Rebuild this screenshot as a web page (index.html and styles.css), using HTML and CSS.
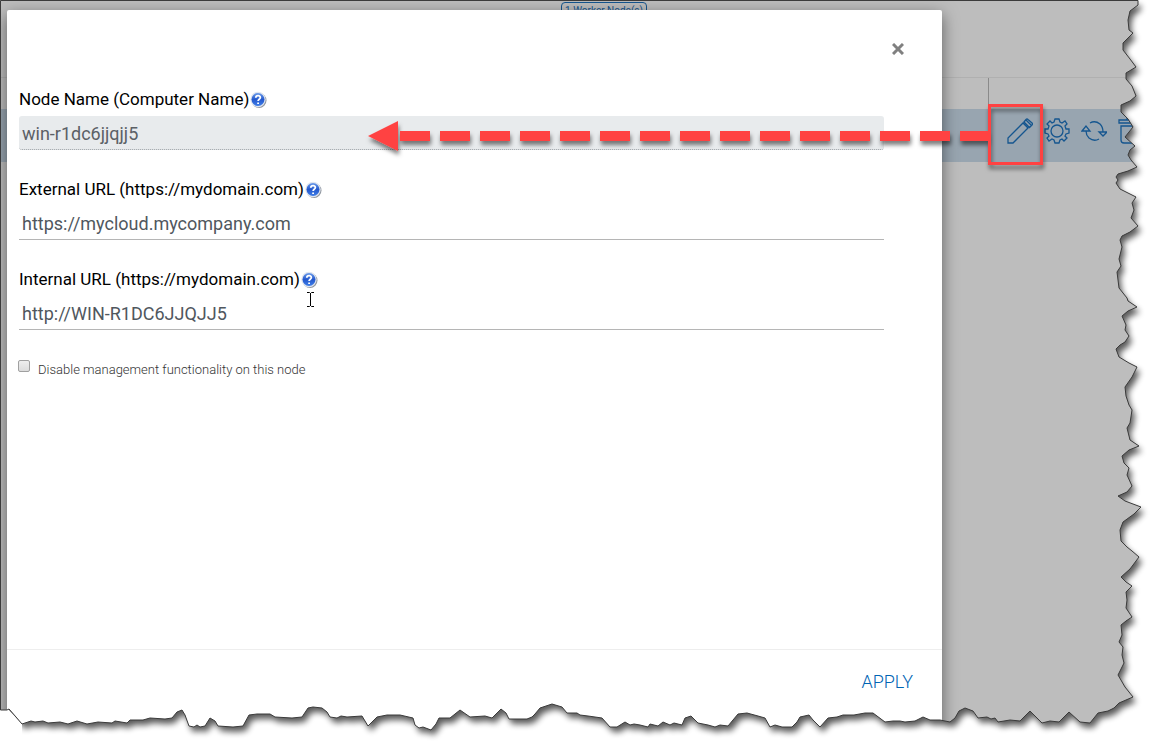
FILE: index.html
```
<!DOCTYPE html>
<html lang="en">
<head>
<meta charset="utf-8">
<title>Edit Worker Node</title>
<link rel="stylesheet" href="styles.css">
</head>
<body>
<div class="page">
  <div class="toolbar">
    <button type="button" class="count">1 Worker Node(s)</button>
  </div>
  <table class="nodes">
    <thead>
      <tr><th></th><th class="actions-head"></th></tr>
    </thead>
    <tbody>
      <tr>
        <td></td>
        <td>
          <div class="actions">
            <button type="button" aria-label="Edit"><svg viewBox="0 0 26 26"><path d="M1 25V20L16 5L21 10L6 25ZM17 4L19 1.500Q20 0.500 21 1.500L25 5Q26 6 25 7L22.500 9.500ZM19 2L24 7"/></svg></button>
            <button type="button" aria-label="Settings"><svg viewBox="0 0 26 26"><circle cx="13" cy="13" r="6"/><path d="M11 1H15L16 4L18 5L21 3L23 6L21 8L22 11L25 11V15L22 16L21 18L23 20L20 23L18 21L16 22L15 25H11L10 22L8 21L5 23L3 20L5 18L4 16L1 15V11L4 11L5 8L3 6L6 3L8 5L10 4Z"/></svg></button>
            <button type="button" aria-label="Refresh"><svg viewBox="0 0 26 26"><path d="M9 5Q14 2 19 6Q22 9 22 14M18 21Q13 24 8 20Q5 17 5 13M1 13L5 8L9 13ZM18 14H26L22 18Z"/></svg></button>
            <button type="button" aria-label="Delete"><svg viewBox="0 0 26 26"><path d="M1 2H25V5H1ZM9 2V0H17V2M3 8V22Q3 25 6 25H20Q23 25 23 22V8Z"/></svg></button>
          </div>
        </td>
      </tr>
    </tbody>
  </table>

  <form class="modal">
    <div class="modal-header">
      <button type="button" class="close" aria-label="Close"><svg viewBox="0 0 12 12"><path d="M1 1L11 11M11 1L1 11"/></svg></button>
    </div>
    <div class="modal-body">
      <div class="field">
        <div class="caption">
          <label for="node">Node Name (Computer Name)</label>
          <svg class="help" viewBox="0 0 18 18"><use href="#help"/></svg>
        </div>
        <input type="text" id="node" value="win-r1dc6jjqjj5" disabled>
      </div>
      <div class="field">
        <div class="caption">
          <label for="external">External URL (https://mydomain.com)</label>
          <svg class="help" viewBox="0 0 18 18"><use href="#help"/></svg>
        </div>
        <input type="text" id="external" value="https://mycloud.mycompany.com">
      </div>
      <div class="field">
        <div class="caption">
          <label for="internal">Internal URL (https://mydomain.com)</label>
          <svg class="help" viewBox="0 0 18 18"><use href="#help"/></svg>
        </div>
        <input type="text" id="internal" value="http://WIN-R1DC6JJQJJ5">
      </div>
      <div class="check">
        <input type="checkbox" id="disable">
        <label for="disable">Disable management functionality on this node</label>
      </div>
    </div>
    <div class="modal-footer">
      <button type="submit" class="apply">APPLY</button>
    </div>
  </form>
</div>

<!-- arrow, highlight box and torn paper edge -->
<svg class="overlay" viewBox="0 0 1162 752" preserveAspectRatio="none">
  <defs>
    <linearGradient id="ball" x1="0" y1="0" x2="0" y2="1">
      <stop offset="0" stop-color="#6b9bea"/>
      <stop offset="0.500" stop-color="#2458cd"/>
      <stop offset="1" stop-color="#3f7ee8"/>
    </linearGradient>
    <symbol id="help" viewBox="0 0 18 18">
      <circle cx="10" cy="10.500" r="7.500" fill="#8f959e"/>
      <circle cx="9" cy="9.500" r="7.700" fill="#dfe5ef"/>
      <circle cx="9" cy="9.500" r="6.500" fill="url(#ball)"/>
      <path d="M6.800 7.700C6.800 4.800 11.500 4.800 11.300 7.700C11.200 9.200 9.100 9.300 9.100 11M9.100 12.500V14.100" fill="none" stroke="#fff" stroke-width="1.800"/>
    </symbol>
    <filter id="drop" x="-10%" y="-50%" width="120%" height="220%">
      <feDropShadow dx="1" dy="4" stdDeviation="2" flood-color="#000" flood-opacity="0.500"/>
    </filter>
    <filter id="soft" x="-5%" y="-5%" width="110%" height="110%">
      <feGaussianBlur stdDeviation="3"/>
    </filter>
    <path id="sheet" d="M0.500 0.500H1138V5L1134 8L1130 11L1128 20L1129 30L1133 33L1130 36L1123 43L1123 50L1130 59L1136 67L1131 70L1126 73V79L1132 86L1136 96L1130 101L1121 105V112L1128 119L1133 127L1125 137L1135 146L1130 150L1128 155L1131 160L1137 167L1128 171L1118 174L1116 177L1118 180L1116 183L1120 189L1128 193L1136 197L1132 203L1134 210L1131 218L1138 226L1130 232L1122 236L1120 240L1122 247L1119 259L1121 266L1117 272L1119 288L1127 298L1128 301L1137 307L1128 311L1122 316L1126 325L1125 330L1129 336L1125 342L1120 345L1116 349L1119 357L1129 363L1137 367L1132 377L1125 387L1126 396L1129 405L1132 410L1130 423L1127 428L1130 440L1139 446L1129 450L1122 456L1124 463L1129 468L1127 475L1132 486L1127 492L1118 496L1125 501L1141 507L1134 514L1123 522L1120 530L1121 541L1127 547L1132 551L1139 557L1130 569L1121 577L1126 582L1132 586L1126 592L1127 600L1126 608L1132 617L1126 621L1121 625L1122 635L1119 642L1123 647L1122 655L1124 663L1118 675L1125 687L1133 697L1119 703L1114 708L1108 711L1098 713L1090 723L1080 722L1069 712L1059 722L1050 721L1042 723L1030 711L1024 717L1020 721L1010 720L998 722L995 718L991 719L987 717L978 718L973 711L965 708L959 711L955 718L950 722L940 720L930 720L923 717L915 721L905 722L900 721L893 721L885 722L877 716L873 713L865 713L854 715L843 715L837 717L828 718L820 727L813 720L809 715L800 717L797 722L792 727L782 727L775 725L770 727L765 718L758 716L747 713L738 714L728 726L720 725L715 727L708 725L698 723L691 716L685 718L682 725L674 723L670 725L663 722L658 726L650 724L648 727L640 725L634 724L630 725L625 722L617 727H610L602 718L588 716L580 715L577 713L567 713L562 707L552 704L540 708L535 714L532 717L527 719H509L506 713L501 709L492 718L485 716L470 717L460 710L455 714L450 718L439 718L436 724L431 730L423 727L419 728L415 725L413 718L400 715H387L377 717L368 726L362 716L347 717L341 716L337 718L330 717L327 712L322 708L313 707L308 708L302 717L292 718L275 717L270 714L257 714L249 715L243 726L233 727L218 726L215 721L210 718L205 726L200 727L197 725L194 727L189 726L185 715L182 710L177 712L172 718L165 719L150 718L143 720L130 720L127 723L115 721L112 723L98 722L87 724L77 721L68 724L60 722L48 723L43 721L35 722L31 721L22 724L16 717L9 709L7 710H0.500Z"/>
    <mask id="off-sheet" maskUnits="userSpaceOnUse" x="0" y="0" width="1162" height="752">
      <rect width="1162" height="752" fill="#fff"/>
      <rect width="1130" height="2" fill="#000"/>
      <rect width="2" height="709" fill="#000"/>
      <use href="#sheet" fill="#000"/>
    </mask>
  </defs>

  <g filter="url(#drop)">
    <rect x="989.500" y="105.500" width="52" height="58" fill="none" stroke="#ff4343" stroke-width="3"/>
    <path d="M400 136H990" stroke="#ff4343" stroke-width="10" stroke-dasharray="30 10"/>
    <path d="M368 136L398 121V151Z" fill="#ff4343"/>
  </g>
  <path d="M307 292.500H309.500L310.500 293.500L311.500 292.500H314M310.500 293V306M307 306.500H309.500L310.500 305.500L311.500 306.500H314" fill="none" stroke="#000"/>

  <g mask="url(#off-sheet)">
    <rect width="1162" height="752" fill="#fff"/>
    <use href="#sheet" x="3" y="5" fill="#000" opacity="0.650" filter="url(#soft)"/>
    <path d="M0 709H8L22 724V752H0Z" fill="#fff"/>
  </g>
  <use href="#sheet" fill="none" stroke="#3b3b3b" stroke-width="1"/>
</svg>
</body>
</html>
```

FILE: styles.css
```
* { box-sizing: border-box; }
body { margin: 0; background: #fff; font-family: Roboto, Arial, sans-serif; }
button { border: 0; padding: 0; background: none; font-family: inherit; }

.page {
  position: relative;
  height: 100vh;
  overflow: hidden;
  background: #bdbdbd;
}

/* page behind the dialog */
.toolbar { height: 77px; padding: 2px 0 0 46px; text-align: center; }
.count {
  display: inline-block;
  height: 17px;
  padding: 0 3px;
  border: 1px solid #15568f;
  border-radius: 4px;
  color: #15568f;
  font-size: 10px;
  line-height: 14px;
  vertical-align: top;
}
.nodes { width: 100%; border-collapse: collapse; table-layout: fixed; }
.nodes th { height: 31px; padding: 0; border-top: 1px solid #b0b0b0; }
.nodes .actions-head { width: 174px; border-left: 1px solid #8a8a8a; }
.nodes td { height: 53px; padding: 0; background: #98a5b0; vertical-align: top; }
.actions { display: flex; gap: 11px; padding: 9px 0 0 19px; }
.actions svg {
  display: block;
  width: 26px;
  height: 26px;
  fill: none;
  stroke: #15568f;
  stroke-width: 1.3px;
}

.modal {
  position: absolute;
  top: 10px;
  bottom: 0;
  left: 7px;
  right: 220px;
  display: flex;
  flex-direction: column;
  border-radius: 2px;
  background: #fff;
  box-shadow: 0 5px 16px rgba(0, 0, 0, 0.5);
}
.modal-header { display: flex; justify-content: flex-end; height: 77px; padding: 33px 38px 0 0; }
.close { width: 12px; height: 12px; }
.close svg { display: block; width: 12px; height: 12px; fill: none; stroke: #808080; stroke-width: 3px; }
.modal-body { flex: 1; padding: 0 58px 0 12px; }

.field { margin-bottom: 27px; }
.caption { display: flex; align-items: center; height: 24px; margin-bottom: 5px; }
.caption label { color: #000; font-size: 17px; line-height: 24px; }
.help { width: 18px; height: 18px; }
.field input {
  display: block;
  width: 100%;
  height: 34px;
  padding: 1px 3px 0;
  border: 0;
  border-bottom: 1px solid #b5b5b5;
  background: #fff;
  color: #50575e;
  font-family: inherit;
  font-size: 18px;
}
.field input:disabled {
  border-bottom: 1px dotted #9aa0a5;
  border-radius: 3px;
  background: #e8ebed;
  color: #5b6066;
}

.check { display: flex; align-items: flex-start; gap: 8px; }
.check input {
  appearance: none;
  width: 12px;
  height: 12px;
  margin: 3px 0 0 -1px;
  border: 1px solid #a0a0a0;
  border-radius: 2px;
  background: linear-gradient(#eee, #dcdcdc);
}
.check label { color: #333; font-size: 13px; font-weight: 300; line-height: 26px; }

.modal-footer {
  display: flex;
  justify-content: flex-end;
  height: 103px;
  padding: 20px 29px 0 0;
  border-top: 1px solid #eee;
}
.apply { height: 24px; color: #0064b4; font-size: 18px; font-weight: 300; line-height: 24px; }

.overlay { position: absolute; top: 0; left: 0; width: 100%; height: 100%; pointer-events: none; }
```
